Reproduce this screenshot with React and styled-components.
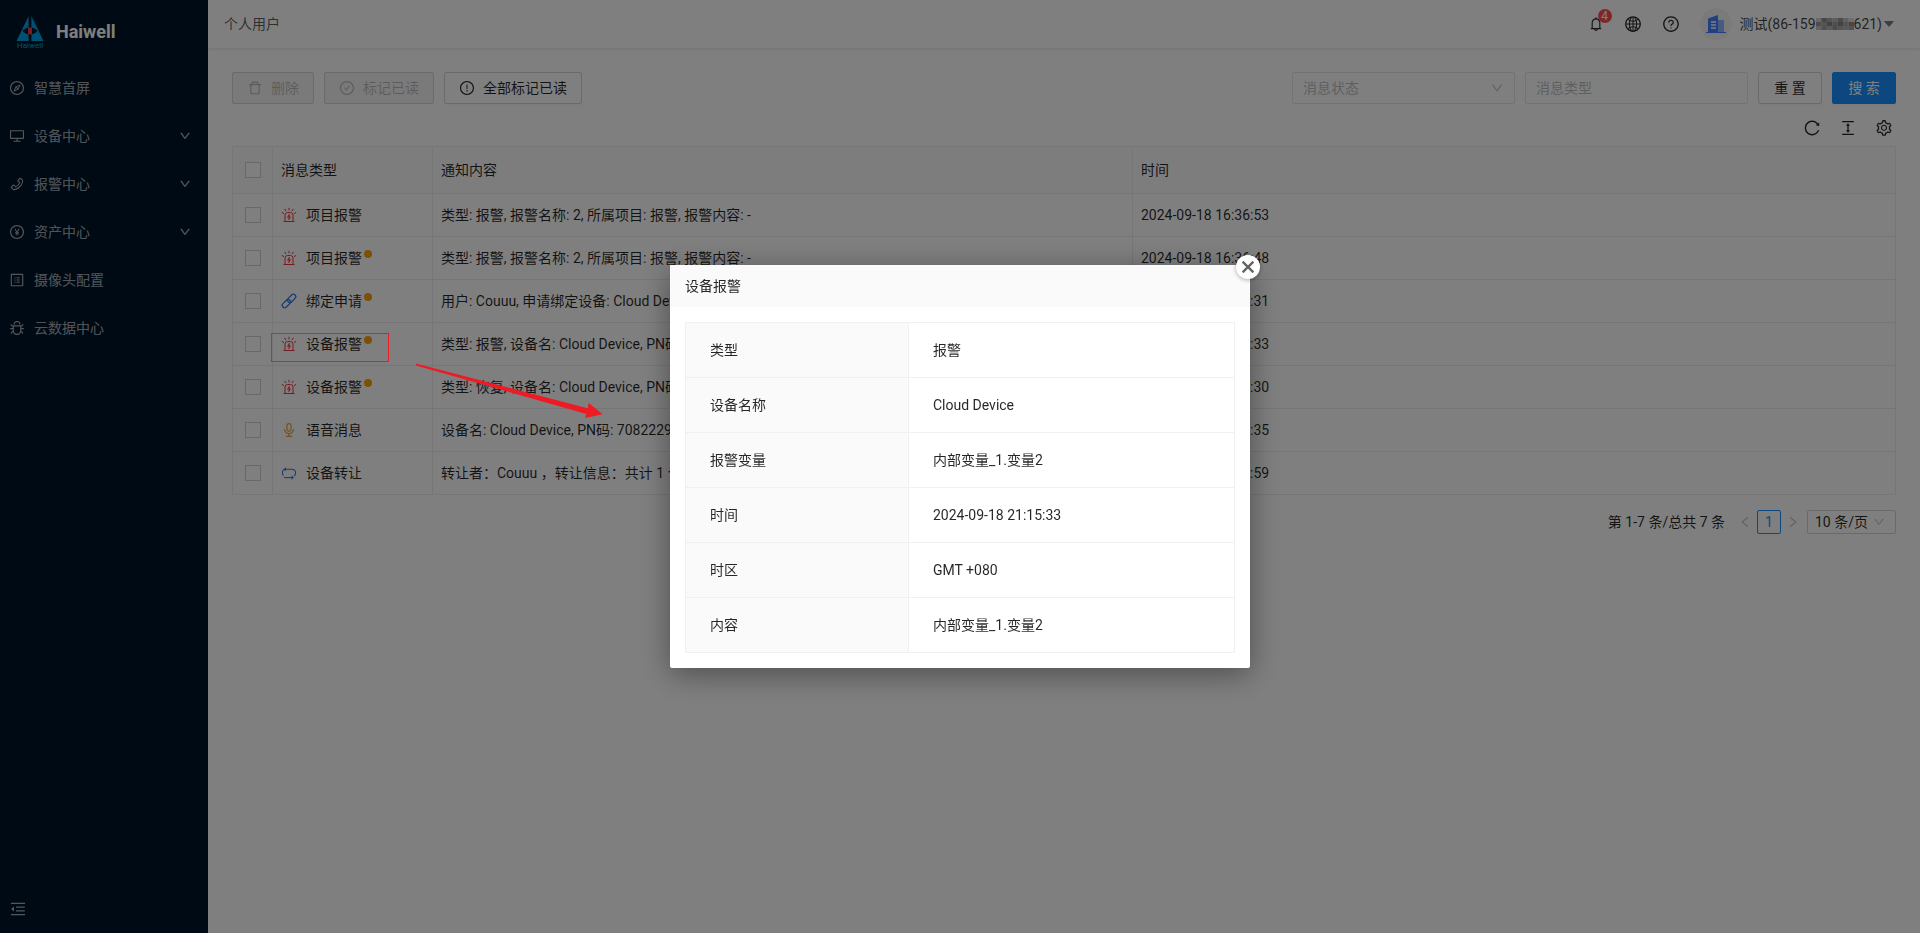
import React from 'react';
import styled, { createGlobalStyle } from 'styled-components';
import {
  AiFillCaretDown,
  AiOutlineAudio,
  AiOutlineBell,
  AiOutlineBug,
  AiOutlineCheckCircle,
  AiOutlineClose,
  AiOutlineColumnHeight,
  AiOutlineCompass,
  AiOutlineDelete,
  AiOutlineDesktop,
  AiOutlineDown,
  AiOutlineExclamationCircle,
  AiOutlineGlobal,
  AiOutlineLeft,
  AiOutlineMenuFold,
  AiOutlinePayCircle,
  AiOutlinePhone,
  AiOutlineProfile,
  AiOutlineQuestionCircle,
  AiOutlineReload,
  AiOutlineRight,
  AiOutlineSetting
} from 'react-icons/ai';

const GlobalStyle = createGlobalStyle`
  * {
    box-sizing: border-box;
  }

  body {
    margin: 0;
    background: #fff;
    color: rgba(0, 0, 0, 0.85);
    font-family: Roboto, 'Noto Sans CJK SC', sans-serif;
    font-size: 14px;
    line-height: 22px;
  }

  button, input, select {
    font: inherit;
    color: inherit;
  }

  svg {
    display: block;
    flex: none;
  }
`;

const Layout = styled.div`
  display: flex;
  min-height: 100vh;
`;

const Sider = styled.aside`
  display: flex;
  flex-direction: column;
  flex: none;
  width: 208px;
  background: #001529;
  color: rgba(255, 255, 255, 0.65);
`;

const Brand = styled.div`
  display: flex;
  align-items: center;
  gap: 12px;
  height: 64px;
  padding: 0 16px;

  h1 {
    margin: 0;
    color: #fff;
    font-size: 18px;
    font-weight: 700;
  }
`;

const Menu = styled.nav`
  display: flex;
  flex: 1;
  flex-direction: column;
`;

const MenuItem = styled.a`
  display: flex;
  align-items: center;
  gap: 9px;
  height: 48px;
  padding: 0 17px 0 9px;
  color: inherit;
  text-decoration: none;

  span {
    flex: 1;
  }
`;

const Collapse = styled.button`
  display: flex;
  align-items: center;
  height: 50px;
  padding: 0 9px;
  border: 0;
  border-top: 1px solid rgba(255, 255, 255, 0.02);
  background: none;
`;

const Main = styled.div`
  flex: 1;
  min-width: 0;
`;

const Header = styled.header`
  display: flex;
  align-items: center;
  justify-content: space-between;
  height: 48px;
  padding: 0 24px 0 16px;
  color: rgba(0, 0, 0, 0.65);
  box-shadow: 0 1px 4px rgba(0, 21, 41, 0.12);
`;

const HeaderActions = styled.div`
  display: flex;
  align-items: center;
  gap: 20px;
  color: rgba(0, 0, 0, 0.85);
`;

const IconButton = styled.button`
  position: relative;
  display: flex;
  padding: 0;
  border: 0;
  background: none;
`;

const Badge = styled.span`
  position: absolute;
  top: -7px;
  right: -8px;
  width: 14px;
  height: 14px;
  border-radius: 7px;
  background: #ff4d4f;
  color: #fff;
  font-size: 12px;
  line-height: 14px;
  text-align: center;
`;

const Account = styled.button`
  display: flex;
  align-items: center;
  padding: 0;
  border: 0;
  background: none;
  color: rgba(0, 0, 0, 0.75);

  & > svg:last-child {
    color: rgba(0, 0, 0, 0.5);
  }
`;

const Avatar = styled.span`
  display: flex;
  align-items: center;
  justify-content: center;
  width: 32px;
  height: 32px;
  margin-right: 8px;
  border-radius: 50%;
  background: #f4f4f4;
`;

const Content = styled.main`
  padding: 24px;
`;

const Toolbar = styled.div`
  display: flex;
  justify-content: space-between;
  gap: 24px;
`;

const ButtonGroup = styled.div`
  display: flex;
  gap: 10px;
`;

const SearchForm = styled.form`
  display: flex;
  flex: 0 1 604px;
  gap: 10px;
`;

const Button = styled.button`
  display: flex;
  flex: none;
  align-items: center;
  gap: 8px;
  height: 32px;
  padding: 0 14px;
  border: 1px solid ${props => (props.$primary ? '#1890ff' : '#d4d4d4')};
  border-radius: 2px;
  background: ${props => (props.$primary ? '#1890ff' : '#fff')};
  color: ${props => (props.$primary ? '#fff' : 'rgba(0, 0, 0, 0.85)')};
  box-shadow: 0 2px 0 rgba(0, 0, 0, 0.02);

  &:disabled {
    background: #f5f5f5;
    color: rgba(0, 0, 0, 0.25);
    box-shadow: none;
  }
`;

const FormButton = styled(Button)`
  justify-content: center;
  width: 64px;
  padding: 0;
`;

const Field = styled.label`
  display: flex;
  flex: 1 1 0;
  align-items: center;
  min-width: 0;
  height: 32px;
  padding: 0 10px;
  border: 1px solid #e6e6e6;
  border-radius: 2px;
  color: #bfbfbf;

  input, select {
    flex: 1;
    min-width: 0;
    padding: 0;
    border: 0;
    outline: 0;
    appearance: none;
    background: none;
  }

  input::placeholder {
    color: #bfbfbf;
    opacity: 1;
  }
`;

const TableTools = styled.div`
  display: flex;
  justify-content: flex-end;
  gap: 12px;
  padding: 12px 0 6px;
`;

const ToolButton = styled(IconButton)`
  align-items: center;
  justify-content: center;
  width: 24px;
  height: 24px;
`;

const MessageTable = styled.table`
  width: 100%;
  border: 1px solid #ececec;
  border-collapse: collapse;
  table-layout: fixed;

  th, td {
    height: 43px;
    padding: 0 8px;
    border: 1px solid #ececec;
    overflow: hidden;
    font-weight: 400;
    text-align: left;
    white-space: nowrap;
  }

  th {
    height: 47px;
    background: #fafafa;
  }
`;

const Checkbox = styled.input`
  display: block;
  width: 16px;
  height: 16px;
  margin: 0 auto;
  border: 1px solid #d0d0d0;
  appearance: none;
  background: #fff;
`;

const MessageType = styled.div`
  display: flex;
  align-items: center;
  gap: 9px;

  svg {
    color: ${props => props.$color};
  }
`;

const Unread = styled.span`
  position: relative;

  &::after {
    position: absolute;
    top: 3px;
    right: -10px;
    width: 8px;
    height: 8px;
    border-radius: 50%;
    background: #fa9f0e;
    content: ${props => (props.$unread ? "''" : 'none')};
  }
`;

const Pagination = styled.div`
  display: flex;
  align-items: center;
  justify-content: flex-end;
  margin-top: 15px;

  svg {
    color: rgba(0, 0, 0, 0.25);
  }
`;

const Total = styled.span`
  margin-right: 8px;
`;

const PageArrow = styled(IconButton)`
  align-items: center;
  justify-content: center;
  width: 24px;
  height: 24px;
`;

const PageNumber = styled.button`
  width: 24px;
  height: 24px;
  padding: 0;
  border: 1px solid #1890ff;
  border-radius: 2px;
  background: #fff;
  color: #1890ff;
`;

const PageSize = styled(Field)`
  flex: none;
  width: 89px;
  height: 24px;
  margin-left: 2px;
  padding: 0 10px 0 7px;
  border-color: #d4d4d4;
  color: rgba(0, 0, 0, 0.85);
`;

const Mask = styled.div`
  position: fixed;
  inset: 0;
  display: flex;
  align-items: center;
  justify-content: center;
  background: rgba(0, 0, 0, 0.5);
`;

const Modal = styled.section`
  position: relative;
  width: 580px;
  border-radius: 2px;
  background: #fff;
  box-shadow: 0 6px 30px rgba(0, 0, 0, 0.4);

  h2 {
    margin: 0;
    padding: 10px 15px;
    background: #fafafa;
    font-size: 14px;
    font-weight: 400;
  }
`;

const ModalBody = styled.div`
  padding: 15px;
`;

const CloseButton = styled.button`
  position: absolute;
  top: -10px;
  right: -10px;
  display: flex;
  align-items: center;
  justify-content: center;
  width: 24px;
  height: 24px;
  padding: 0;
  border: 0;
  border-radius: 50%;
  background: #fff;
  color: #666;
  box-shadow: 0 1px 4px rgba(0, 0, 0, 0.3);
`;

const DetailTable = styled.table`
  width: 100%;
  border-collapse: collapse;
  table-layout: fixed;

  th, td {
    height: 55px;
    padding: 0 24px;
    border: 1px solid #f0f0f0;
    font-weight: 400;
    text-align: left;
  }

  th {
    width: 223px;
    background: #fafafa;
  }
`;

const Marks = styled.svg`
  position: absolute;
  top: 333px;
  left: 271px;
  pointer-events: none;
`;

const Siren = () => (
  <svg width="16" height="16" viewBox="0 0 16 16" fill="none" stroke="currentColor" aria-hidden="true">
    <path d="M4 14.5 V8 Q4 5.5 6.5 5.5 H9.5 Q12 5.5 12 8 V14.5" />
    <path d="M2.5 14.5 H13.5 M8 0.8 V3.4 M3.6 1.8 L5 4 M12.4 1.8 L11 4 M0.8 5.4 L3 6.6 M15.2 5.4 L13 6.6" />
    <path d="M8.6 7.2 L7 10 H9 L7.6 12.8" strokeWidth="1.2" />
  </svg>
);

const Chain = () => (
  <svg width="16" height="16" viewBox="0 0 16 16" fill="none" stroke="currentColor" strokeWidth="1.3" aria-hidden="true">
    <g transform="rotate(-45 8 8)">
      <rect x="-0.5" y="5.6" width="9.6" height="4.8" rx="2.4" />
      <rect x="6.9" y="5.6" width="9.6" height="4.8" rx="2.4" />
    </g>
  </svg>
);

const Loop = () => (
  <svg width="16" height="16" viewBox="0 0 16 16" fill="none" stroke="currentColor" strokeWidth="1.1" aria-hidden="true">
    <path d="M2.6 10.6 Q1.4 9.6 1.4 8 Q1.4 4.2 5 4.2 H10.5 Q14.6 4.2 14.6 8 Q14.6 9.8 13.2 11" />
    <path d="M3 12.6 H11" />
    <path d="M5 2.2 L2.6 4.2 L5 6.2 Z M10.6 10.4 L13 12.6 L10.6 14.8 Z" fill="currentColor" stroke="none" />
  </svg>
);

const menu = [
  { label: '智慧首屏', Icon: AiOutlineCompass },
  { label: '设备中心', Icon: AiOutlineDesktop, children: true },
  { label: '报警中心', Icon: AiOutlinePhone, children: true },
  { label: '资产中心', Icon: AiOutlinePayCircle, children: true },
  { label: '摄像头配置', Icon: AiOutlineProfile },
  { label: '云数据中心', Icon: AiOutlineBug }
];

const kinds = {
  alarm: { Icon: Siren, color: '#f0343f' },
  bind: { Icon: Chain, color: '#2f7de0' },
  voice: { Icon: AiOutlineAudio, color: '#e8a23c' },
  transfer: { Icon: Loop, color: '#2f7de0' }
};

const messages = [
  {
    kind: 'alarm',
    type: '项目报警',
    content: '类型: 报警, 报警名称: 2, 所属项目: 报警, 报警内容: -',
    time: '2024-09-18 16:36:53'
  },
  {
    kind: 'alarm',
    type: '项目报警',
    unread: true,
    content: '类型: 报警, 报警名称: 2, 所属项目: 报警, 报警内容: -',
    time: '2024-09-18 16:36:48'
  },
  {
    kind: 'bind',
    type: '绑定申请',
    unread: true,
    content: '用户: Couuu, 申请绑定设备: Cloud Device',
    time: '2024-09-18 16:30:31'
  },
  {
    kind: 'alarm',
    type: '设备报警',
    unread: true,
    content: '类型: 报警, 设备名: Cloud Device, PN码: 7082229',
    time: '2024-09-18 21:15:33'
  },
  {
    kind: 'alarm',
    type: '设备报警',
    unread: true,
    content: '类型: 恢复, 设备名: Cloud Device, PN码: 7082229',
    time: '2024-09-18 21:15:30'
  },
  {
    kind: 'voice',
    type: '语音消息',
    content: '设备名: Cloud Device, PN码: 7082229',
    time: '2024-09-18 16:20:35'
  },
  {
    kind: 'transfer',
    type: '设备转让',
    content: '转让者：Couuu ，转让信息：共计 1 个设备',
    time: '2024-09-18 16:10:59'
  }
];

const details = [
  ['类型', '报警'],
  ['设备名称', 'Cloud Device'],
  ['报警变量', '内部变量_1.变量2'],
  ['时间', '2024-09-18 21:15:33'],
  ['时区', 'GMT +080'],
  ['内容', '内部变量_1.变量2']
];

const mosaic = [
  '#d0d0d0', '#8c8c8c', '#a8a8a8', '#b8b8b8', '#989898', '#c2c2c2', '#dcdcdc',
  '#9a9a9a', '#a8a8a8', '#848484', '#9e9e9e', '#868686', '#a6a6a6', '#8e8e8e',
  '#c4c4c4', '#a0a0a0', '#b4b4b4', '#969696', '#acacac', '#b2b2b2', '#a4a4a4'
];

const Logo = () => (
  <svg width="28" height="33" viewBox="0 0 28 33" aria-hidden="true">
    <path d="M12.6 0 V25 H0.5 Z M15.4 0 V25 H27.5 Z" fill="#00a0e9" />
    <path d="M6.5 15 Q14 7.5 21.5 15 Q14 22.5 6.5 15 Z" fill="#001529" />
    <rect x="12" y="11.5" width="4" height="7" fill="#f03a3e" />
    <text x="14" y="32" fill="#00a0e9" fontSize="8" textAnchor="middle">
      Haiwell
    </text>
  </svg>
);

const Building = () => (
  <svg width="20" height="20" viewBox="0 0 20 20" aria-hidden="true">
    <path d="M11 6 h6 a1 1 0 0 1 1 1 v12 h-7 Z" fill="#8fb4ff" />
    <path d="M2 4.5 L12 1 V19 H2 Z" fill="#4080ff" />
    <path d="M0 18 h20 v1 h-20 Z" fill="#4080ff" />
    <path d="M5 8 h5 M5 11 h5 M5 14 h5" stroke="#fff" strokeWidth="1.4" />
  </svg>
);

const HiddenDigits = () => (
  <svg width="38" height="12" viewBox="0 0 42 12" preserveAspectRatio="none" aria-hidden="true">
    {mosaic.map((fill, i) => (
      <rect key={i} x={(i % 7) * 6} y={Math.floor(i / 7) * 4} width="6" height="4" fill={fill} />
    ))}
  </svg>
);

const Sidebar = () => (
  <Sider>
    <Brand>
      <Logo />
      <h1>Haiwell</h1>
    </Brand>
    <Menu>
      {menu.map(({ label, Icon, children }) => (
        <MenuItem key={label} href="#">
          <Icon size={16} />
          <span>{label}</span>
          {children && <AiOutlineDown size={12} strokeWidth={30} />}
        </MenuItem>
      ))}
    </Menu>
    <Collapse aria-label="收起菜单">
      <AiOutlineMenuFold size={18} />
    </Collapse>
  </Sider>
);

const TopBar = () => (
  <Header>
    <span>个人用户</span>
    <HeaderActions>
      <IconButton aria-label="通知">
        <AiOutlineBell size={16} />
        <Badge>4</Badge>
      </IconButton>
      <IconButton aria-label="语言">
        <AiOutlineGlobal size={18} />
      </IconButton>
      <IconButton aria-label="帮助">
        <AiOutlineQuestionCircle size={18} />
      </IconButton>
      <Account>
        <Avatar>
          <Building />
        </Avatar>
        测试(86-159
        <HiddenDigits />
        621)
        <AiFillCaretDown size={14} />
      </Account>
    </HeaderActions>
  </Header>
);

const MessageList = () => (
  <MessageTable>
    <colgroup>
      <col width="40" />
      <col width="160" />
      <col width="700" />
      <col />
    </colgroup>
    <thead>
      <tr>
        <th>
          <Checkbox type="checkbox" aria-label="全选" />
        </th>
        <th>消息类型</th>
        <th>通知内容</th>
        <th>时间</th>
      </tr>
    </thead>
    <tbody>
      {messages.map(({ kind, type, unread, content, time }) => {
        const { Icon, color } = kinds[kind];
        return (
          <tr key={time}>
            <td>
              <Checkbox type="checkbox" aria-label={type} />
            </td>
            <td>
              <MessageType $color={color}>
                <Icon size={16} />
                <Unread $unread={unread}>{type}</Unread>
              </MessageType>
            </td>
            <td>{content}</td>
            <td>{time}</td>
          </tr>
        );
      })}
    </tbody>
  </MessageTable>
);

const DetailModal = () => (
  <Mask>
    <Modal role="dialog" aria-labelledby="detail-title">
      <h2 id="detail-title">设备报警</h2>
      <CloseButton aria-label="关闭">
        <AiOutlineClose size={16} strokeWidth={70} />
      </CloseButton>
      <ModalBody>
        <DetailTable>
          <tbody>
            {details.map(([label, value]) => (
              <tr key={label}>
                <th scope="row">{label}</th>
                <td>{value}</td>
              </tr>
            ))}
          </tbody>
        </DetailTable>
      </ModalBody>
    </Modal>
  </Mask>
);

const App = () => (
  <>
    <GlobalStyle />
    <Layout>
      <Sidebar />
      <Main>
        <TopBar />
        <Content>
          <Toolbar>
            <ButtonGroup>
              <Button disabled>
                <AiOutlineDelete size={16} />
                删除
              </Button>
              <Button disabled>
                <AiOutlineCheckCircle size={16} />
                标记已读
              </Button>
              <Button>
                <AiOutlineExclamationCircle size={16} />
                全部标记已读
              </Button>
            </ButtonGroup>
            <SearchForm>
              <Field>
                <select aria-label="消息状态">
                  <option>消息状态</option>
                </select>
                <AiOutlineDown size={14} />
              </Field>
              <Field>
                <input type="text" placeholder="消息类型" aria-label="消息类型" />
              </Field>
              <FormButton type="reset">重 置</FormButton>
              <FormButton type="button" $primary>
                搜 索
              </FormButton>
            </SearchForm>
          </Toolbar>
          <TableTools>
            <ToolButton aria-label="刷新">
              <AiOutlineReload size={18} />
            </ToolButton>
            <ToolButton aria-label="密度">
              <AiOutlineColumnHeight size={18} />
            </ToolButton>
            <ToolButton aria-label="列设置">
              <AiOutlineSetting size={18} />
            </ToolButton>
          </TableTools>
          <MessageList />
          <Pagination>
            <Total>第 1-7 条/总共 7 条</Total>
            <PageArrow aria-label="上一页">
              <AiOutlineLeft size={14} />
            </PageArrow>
            <PageNumber>1</PageNumber>
            <PageArrow aria-label="下一页">
              <AiOutlineRight size={14} />
            </PageArrow>
            <PageSize>
              <select aria-label="每页条数">
                <option>10 条/页</option>
              </select>
              <AiOutlineDown size={12} />
            </PageSize>
          </Pagination>
        </Content>
      </Main>
    </Layout>
    <DetailModal />
    <Marks width="334" height="88" viewBox="0 0 334 88" aria-hidden="true">
      <rect x="0.5" y="0.5" width="117" height="28" fill="none" stroke="#ed1c24" />
      <path
        d="M145 30.5 L316.7 75.2 L317.7 70 L331.7 81.3 L314 85 L315.3 81 L145 32.5 Z"
        fill="#ed1c24"
      />
    </Marks>
  </>
);

export default App;
